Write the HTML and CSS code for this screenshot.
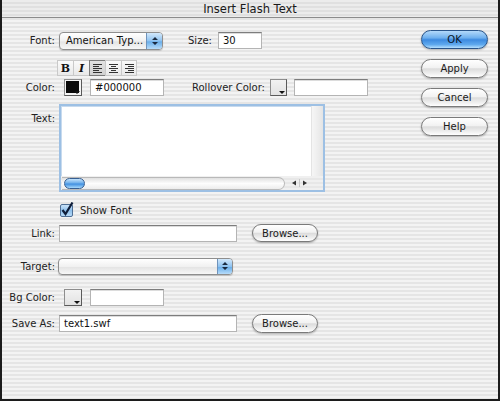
FILE: index.html
```html
<!DOCTYPE html>
<html>
<head>
<meta charset="utf-8">
<title>Insert Flash Text</title>
<link rel="stylesheet" href="styles.css">
</head>
<body>
<div class="window">
  <div class="titlebar">Insert Flash Text</div>
  <div class="content">
    <div class="form">
      <div class="row r1">
        <span class="label">Font:</span>
        <div class="select sel-font">
          <span class="sel-text">American Typ...</span>
          <span class="sel-arrows"><svg width="8" height="10" viewBox="0 0 8 10"><path d="M4 1 L7 4 L1 4 Z M1 6 L7 6 L4 9 Z" fill="#1a2a40"/></svg></span>
        </div>
        <span class="inline-label size-label">Size:</span>
        <div class="field size-field">30</div>
      </div>

      <div class="row r2">
        <span class="label"></span>
        <div class="toolbar">
          <span class="tb tb-b">B</span>
          <span class="tb tb-i">I</span>
          <span class="tb tb-on"><svg width="11" height="10" viewBox="0 0 11 10"><path d="M1 1.5H10M1 3.5H7M1 5.5H10M1 7.5H7M1 9.5H10" stroke="#333" stroke-width="1"/></svg></span>
          <span class="tb"><svg width="11" height="10" viewBox="0 0 11 10"><path d="M1 1.5H10M3 3.5H8M1 5.5H10M3 7.5H8M1 9.5H10" stroke="#333" stroke-width="1"/></svg></span>
          <span class="tb"><svg width="11" height="10" viewBox="0 0 11 10"><path d="M1 1.5H10M4 3.5H10M1 5.5H10M4 7.5H10M1 9.5H10" stroke="#333" stroke-width="1"/></svg></span>
        </div>
      </div>

      <div class="row r3">
        <span class="label">Color:</span>
        <span class="swatch swatch-black"><span class="swatch-tri"></span></span>
        <div class="field hex-field">#000000</div>
        <span class="inline-label rollover-label">Rollover Color:</span>
        <span class="swatch swatch-empty roll-swatch"><span class="swatch-tri"></span></span>
        <div class="field hex-field roll-field"></div>
      </div>

      <div class="row r4">
        <span class="label label-top">Text:</span>
        <div class="textarea">
          <div class="ta-main">
            <div class="ta-body"></div>
            <div class="ta-vscroll"></div>
          </div>
          <div class="ta-hscroll">
            <div class="hs-track"><span class="hs-thumb"></span></div>
            <div class="hs-arrows">
              <svg width="22" height="10" viewBox="0 0 22 10"><path d="M4 5 L8 2.5 L8 7.5 Z" fill="#333"/><path d="M11.5 1V9" stroke="#c8c8c8"/><path d="M15 2.5 L19 5 L15 7.5 Z" fill="#333"/></svg>
            </div>
          </div>
        </div>
      </div>

      <div class="row r5">
        <span class="label"></span>
        <span class="checkbox"><svg width="14" height="15" viewBox="0 0 14 15"><defs><linearGradient id="cb" x1="0" y1="0" x2="0" y2="1"><stop offset="0" stop-color="#cfe6fa"/><stop offset="0.5" stop-color="#8fc0ec"/><stop offset="1" stop-color="#b9dcf8"/></linearGradient></defs><rect x="0.5" y="2.5" width="12" height="12" rx="1.5" fill="url(#cb)" stroke="#4f6f95"/><path d="M2.5 8 L5.5 12 L12.5 0.5" fill="none" stroke="#0f1e3a" stroke-width="2.2"/></svg></span>
        <span class="check-label">Show Font</span>
      </div>

      <div class="row r6">
        <span class="label">Link:</span>
        <div class="field long-field"></div>
        <span class="btn browse">Browse...</span>
      </div>

      <div class="row r7">
        <span class="label">Target:</span>
        <div class="select sel-target">
          <span class="sel-text"></span>
          <span class="sel-arrows"><svg width="8" height="10" viewBox="0 0 8 10"><path d="M4 1 L7 4 L1 4 Z M1 6 L7 6 L4 9 Z" fill="#1a2a40"/></svg></span>
        </div>
      </div>

      <div class="row r8">
        <span class="label">Bg Color:</span>
        <span class="swatch swatch-empty"><span class="swatch-tri"></span></span>
        <div class="field hex-field"></div>
      </div>

      <div class="row r9">
        <span class="label">Save As:</span>
        <div class="field long-field">text1.swf</div>
        <span class="btn browse">Browse...</span>
      </div>
    </div>

    <div class="buttons">
      <span class="btn big ok">OK</span>
      <span class="btn big">Apply</span>
      <span class="btn big">Cancel</span>
      <span class="btn big">Help</span>
    </div>
  </div>
</div>
</body>
</html>
```

FILE: styles.css
```css
* { box-sizing: border-box; }
html, body { margin: 0; padding: 0; }
body {
  width: 500px;
  height: 401px;
  overflow: hidden;
  background: #1a1a1a;
  font-family: "DejaVu Sans", "Liberation Sans", sans-serif;
  font-size: 10px;
  color: #222;
}
.window {
  width: 500px;
  height: 401px;
  border-left: 2px solid #1c1c1c;
  border-right: 2px solid #1c1c1c;
  border-bottom: 2px solid #1c1c1c;
  background: repeating-linear-gradient(#f3f3f3 0 2px, #e5e5e5 2px 4px);
  display: flex;
  flex-direction: column;
}
.titlebar {
  height: 18px;
  flex: none;
  text-align: center;
  font-size: 11.5px;
  line-height: 19px;
  color: #1a1a1a;
  background: repeating-linear-gradient(#ececec 0 2px, #e0e0e0 2px 4px);
  border-bottom: 1px solid #8c8c8c;
}
.content {
  flex: 1;
  display: flex;
}
.form {
  flex: 1;
  padding-top: 13px;
  display: flex;
  flex-direction: column;
}
.row {
  display: flex;
  align-items: center;
}
.label {
  width: 53px;
  margin-right: 4px;
  text-align: right;
  flex: none;
  white-space: nowrap;
  color: #222;
}
.inline-label { white-space: nowrap; color: #222; }

.r1 { height: 19px; }
.r2 { height: 16px; margin-top: 10px; }
.r3 { height: 17px; margin-top: 3px; }
.r4 { height: 88px; margin-top: 8px; align-items: flex-start; }
.r5 { height: 16px; margin-top: 9px; }
.r6 { height: 18px; margin-top: 7px; }
.r7 { height: 18px; margin-top: 15px; }
.r8 { height: 18px; margin-top: 13px; }
.r9 { height: 19px; margin-top: 8px; }

.field {
  background: #fff;
  border: 1px solid #b4b4b4;
  border-top-color: #7d7d7d;
  box-shadow: inset 0 1px 0 #dcdcdc;
  height: 17px;
  line-height: 15px;
  padding-left: 4px;
  color: #111;
}

.select {
  height: 18px;
  display: flex;
  align-items: stretch;
  border: 1px solid #8e8e8e;
  border-radius: 4px;
  background: linear-gradient(#ffffff, #f1f1f1 50%, #e4e4e4 55%, #f7f7f7);
  box-shadow: 0 1px 1px rgba(0,0,0,0.18);
  overflow: hidden;
}
.sel-text { flex: 1; padding-left: 6px; line-height: 16px; white-space: nowrap; color: #111; }
.sel-arrows {
  width: 16px;
  display: flex;
  align-items: center;
  justify-content: center;
  background: linear-gradient(#d2e8fb, #8ec2f0 50%, #6aaee9 55%, #b7dcfa);
  border-left: 1px solid #6f93bb;
}
.sel-font { width: 104px; }
.size-label { margin-left: 25px; }
.size-field { width: 44px; margin-left: 6px; }
.sel-target { width: 175px; height: 17px; margin-left: -1px; }
.sel-target .sel-arrows { width: 15px; }

.toolbar { display: flex; margin-left: -2px; height: 16px; }
.tb {
  width: 16px;
  height: 16px;
  display: flex;
  align-items: center;
  justify-content: center;
  border: 1px solid #c9c9c9;
  border-right: none;
  background: linear-gradient(#fafafa, #e9e9e9);
  font-family: "DejaVu Serif", "Liberation Serif", serif;
  font-weight: bold;
  font-size: 11px;
  color: #111;
}
.tb:last-child { border-right: 1px solid #c9c9c9; }
.tb-i { font-style: italic; }
.tb-on { border: 1px solid #7c7c7c; border-right: none; background: linear-gradient(#e2e2e2, #d2d2d2); }

.swatch {
  position: relative;
  width: 18px;
  height: 17px;
  margin-left: 5px;
  border: 1px solid #8d8d8d;
  border-right-color: #5a5a5a;
  border-bottom-color: #5a5a5a;
  background: #f4f4f4;
  padding: 1px 2px 2px 1px;
  flex: none;
}
.swatch-black::before {
  content: "";
  display: block;
  width: 100%;
  height: 100%;
  background: #0a0a0a;
}
.swatch-empty { background: linear-gradient(#f2f2f2, #e2e2e2); }
.swatch-tri {
  position: absolute;
  right: 1px;
  bottom: 1px;
  width: 0;
  height: 0;
  border-left: 3px solid transparent;
  border-right: 3px solid transparent;
  border-top: 3px solid #111;
}
.hex-field { width: 74px; margin-left: 8px; }
.rollover-label { margin-left: 28px; }
.roll-swatch { margin-left: 5px; width: 17px; }
.roll-field { margin-left: 7px; }

.label-top { padding-top: 9px; }
.textarea {
  width: 266px;
  height: 88px;
  border: 2px solid #9dc0e4;
  box-shadow: inset 0 0 0 1px #c7daee;
  background: #fff;
  display: flex;
  flex-direction: column;
}
.ta-main { flex: 1; display: flex; }
.ta-body { flex: 1; }
.ta-vscroll {
  width: 12px;
  background: linear-gradient(90deg, #f6f6f6, #ececec 60%, #e4e4e4);
  border-left: 1px solid #e4e4e4;
}
.ta-hscroll {
  height: 14px;
  display: flex;
  align-items: center;
  background: repeating-linear-gradient(#f0f0f0 0 2px, #e7e7e7 2px 4px);
}
.hs-track {
  width: 223px;
  height: 13px;
  margin-left: 1px;
  border-radius: 0 7px 7px 0;
  border: 1px solid #b9b9b9;
  border-left: none;
  background: linear-gradient(#e0e0e0, #fdfdfd 50%, #ececec);
  display: flex;
  align-items: center;
  padding-left: 2px;
}
.hs-thumb {
  width: 21px;
  height: 11px;
  border-radius: 6px;
  border: 1px solid #375f92;
  background: linear-gradient(#c4e3fc, #6eaeea 45%, #3f8ee0 55%, #a6d8fc);
}
.hs-arrows { margin-left: 3px; display: flex; align-items: center; }

.checkbox { margin-left: 1px; display: flex; width: 14px; height: 15px; }
.check-label { margin-left: 6px; padding-top: 3px; color: #1e1e1e; }

.long-field { width: 178px; }

.btn {
  display: flex;
  align-items: center;
  justify-content: center;
  border: 1px solid #7a7a7a;
  border-radius: 10px;
  background: linear-gradient(#ffffff, #f2f2f2 45%, #dcdcdc 52%, #f3f3f3 85%, #ffffff);
  box-shadow: 0 1px 2px rgba(0,0,0,0.28);
  color: #1a1a1a;
  white-space: nowrap;
}
.browse { width: 66px; height: 18px; margin-left: 15px; }
.r9 .browse { height: 19px; }

.buttons {
  width: 89px;
  flex: none;
  padding-top: 12px;
  padding-right: 10px;
  display: flex;
  flex-direction: column;
  align-items: flex-end;
  gap: 10px;
}
.big { width: 67px; height: 19px; }
.ok {
  border-color: #28548a;
  background: linear-gradient(#b3d9fa, #6fb0ee 40%, #3d8ae0 52%, #5fa9ee 80%, #b5e0ff);
  color: #0a1626;
}
```
